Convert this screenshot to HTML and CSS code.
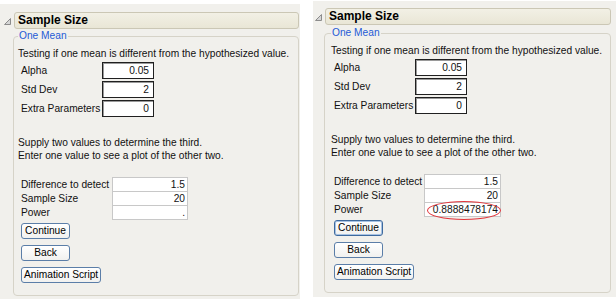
FILE: index.html
```html
<!DOCTYPE html>
<html lang="en">
<head>
<meta charset="utf-8">
<title>Sample Size</title>
<link rel="stylesheet" href="styles.css">
</head>
<body>
<div class="page">
  <section class="panel panel-a">
    <div class="head">
      <svg class="disc" width="7" height="7" viewBox="0 0 7 7"><path d="M6.5 0.5 V6.5 H0.5 Z" fill="#d6d6d6" stroke="#8c8c8c" stroke-width="1" stroke-linejoin="round"/></svg>
      <div class="titlebar">Sample Size</div>
    </div>
    <fieldset class="group">
      <legend class="legend">One Mean</legend>
      <p class="line">Testing if one mean is different from the hypothesized value.</p>
      <div class="params">
        <div class="prow"><span class="plabel">Alpha</span><span class="pbox">0.05</span></div>
        <div class="prow"><span class="plabel">Std Dev</span><span class="pbox">2</span></div>
        <div class="prow"><span class="plabel">Extra Parameters</span><span class="pbox">0</span></div>
      </div>
      <p class="line supply">Supply two values to determine the third.</p>
      <p class="line">Enter one value to see a plot of the other two.</p>
      <div class="calc">
        <div class="crow"><span class="clabel">Difference to detect</span><span class="cval">1.5</span></div>
        <div class="crow"><span class="clabel">Sample Size</span><span class="cval">20</span></div>
        <div class="crow"><span class="clabel">Power</span><span class="cval">.</span></div>
      </div>
      <div class="buttons">
        <button class="btn" type="button">Continue</button>
        <button class="btn" type="button">Back</button>
        <button class="btn" type="button">Animation Script</button>
      </div>
    </fieldset>
  </section>

  <section class="panel panel-b">
    <div class="head">
      <svg class="disc" width="7" height="7" viewBox="0 0 7 7"><path d="M6.5 0.5 V6.5 H0.5 Z" fill="#d6d6d6" stroke="#8c8c8c" stroke-width="1" stroke-linejoin="round"/></svg>
      <div class="titlebar">Sample Size</div>
    </div>
    <fieldset class="group">
      <legend class="legend">One Mean</legend>
      <p class="line">Testing if one mean is different from the hypothesized value.</p>
      <div class="params">
        <div class="prow"><span class="plabel">Alpha</span><span class="pbox">0.05</span></div>
        <div class="prow"><span class="plabel">Std Dev</span><span class="pbox">2</span></div>
        <div class="prow"><span class="plabel">Extra Parameters</span><span class="pbox">0</span></div>
      </div>
      <p class="line supply">Supply two values to determine the third.</p>
      <p class="line">Enter one value to see a plot of the other two.</p>
      <div class="calc">
        <div class="crow"><span class="clabel">Difference to detect</span><span class="cval">1.5</span></div>
        <div class="crow"><span class="clabel">Sample Size</span><span class="cval">20</span></div>
        <div class="crow"><span class="clabel">Power</span><span class="cval cval-marked">0.8888478174</span></div>
      </div>
      <div class="buttons">
        <button class="btn btn-focus" type="button">Continue</button>
        <button class="btn" type="button">Back</button>
        <button class="btn" type="button">Animation Script</button>
      </div>
    </fieldset>
  </section>
</div>
</body>
</html>
```

FILE: styles.css
```css
html, body {
  margin: 0;
  padding: 0;
  background: #ffffff;
}

body {
  font-family: "Liberation Sans", Arial, sans-serif;
  font-size: 10.2px;
  color: #111111;
}

.page {
  display: flex;
  align-items: flex-start;
  width: 616px;
  height: 299px;
  overflow: hidden;
}

.panel {
  background: #f1f0ec;
  box-sizing: border-box;
  padding-top: 8px;
  padding-bottom: 4px;
}

.panel-a {
  width: 300px;
  margin-top: 4px;
}

.panel-b {
  width: 303px;
  margin-top: 1px;
  margin-left: 13px;
  padding-top: 7px;
}

.head {
  display: flex;
  align-items: center;
  gap: 3px;
  padding-left: 4px;
  margin-right: 1px;
}

.panel-b .head {
  padding-left: 2px;
  margin-right: 5px;
}

.disc {
  flex: none;
  display: block;
  margin-top: 1px;
}

.titlebar {
  flex: 1;
  box-sizing: border-box;
  height: 17px;
  border: 1px solid #cbc7b5;
  border-radius: 3px;
  background: linear-gradient(#f2f0e5, #e9e6d6);
  font-weight: bold;
  font-size: 12px;
  line-height: 15px;
  padding-left: 3px;
  color: #000000;
}

.group {
  margin: 1px 1px 0 13px;
  padding: 5px 4px 12px 4px;
  border: 1px solid #d6d3c8;
  border-radius: 4px;
  min-inline-size: 0;
}

.panel-b .group {
  margin: 2px 5px 0 11px;
  padding-left: 6px;
}

.legend {
  padding: 0 1px;
  margin: 0;
  line-height: 12px;
  color: #1f5bd6;
}

.line {
  margin: 0;
  line-height: 13px;
  white-space: nowrap;
}

.supply {
  margin-top: 19px;
}

.params {
  display: flex;
  flex-direction: column;
  gap: 2px;
  margin: 2px 0 0 3px;
}

.prow {
  display: flex;
  align-items: center;
  height: 17px;
}

.plabel {
  width: 81px;
  flex: none;
  white-space: nowrap;
}

.pbox {
  width: 52px;
  height: 17px;
  box-sizing: border-box;
  border: 1px solid #202020;
  box-shadow: inset 1px 1px 0 #9a9a9a;
  background: #ffffff;
  text-align: right;
  padding-right: 4px;
  line-height: 15px;
}

.calc {
  display: flex;
  flex-direction: column;
  margin: 15px 0 0 3px;
}

.crow {
  display: flex;
  align-items: flex-start;
  height: 14px;
}

.crow:last-child {
  height: 15px;
}

.clabel {
  width: 91px;
  flex: none;
  line-height: 15px;
  white-space: nowrap;
}

.panel-b .clabel {
  width: 90px;
}

.cval {
  position: relative;
  width: 76px;
  height: 15px;
  box-sizing: border-box;
  border: 1px solid #c8c8c8;
  background: #ffffff;
  text-align: right;
  padding-right: 2px;
  line-height: 13px;
}

.panel-b .cval {
  width: 77px;
}

.cval-marked::after {
  content: "";
  position: absolute;
  top: -2px;
  bottom: -4px;
  left: 2px;
  right: -1px;
  border: 1px solid #e2363c;
  border-radius: 50%;
}

.buttons {
  display: flex;
  flex-direction: column;
  align-items: flex-start;
  gap: 6px;
  margin: 3px 0 0 3px;
}

.btn {
  display: block;
  box-sizing: border-box;
  height: 16px;
  min-width: 49px;
  padding: 0 2px;
  margin: 0;
  border: 1px solid #5b7ea8;
  border-radius: 3px;
  background: linear-gradient(#ffffff, #f1f1ef);
  font-family: inherit;
  font-size: 10.2px;
  line-height: 14px;
  color: #000000;
  white-space: nowrap;
}

.btn-focus {
  border-color: #3e6a9e;
  box-shadow: inset 0 0 0 1px #a8c3e3;
}
```
